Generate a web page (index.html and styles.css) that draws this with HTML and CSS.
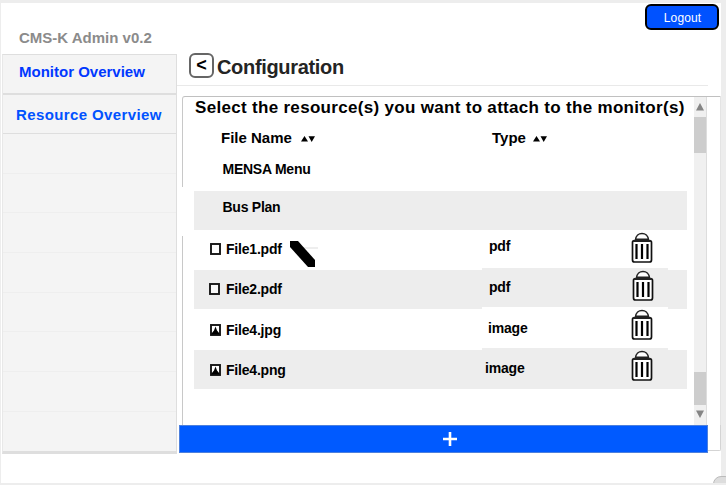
FILE: index.html
```html
<!DOCTYPE html>
<html lang="en">
<head>
<meta charset="utf-8">
<title>CMS-K Admin</title>
<link rel="stylesheet" href="styles.css">
</head>
<body>
<svg width="0" height="0" class="defs">
  <symbol id="trash" viewBox="0 0 22 32">
    <path d="M4.500 8C5-.8 17-.8 17.500 8" fill="#fff" stroke="#222" stroke-width="1.500"/>
    <rect x="1.500" y="8.500" width="19" height="21.500" rx="2" fill="#fff" stroke="#111" stroke-width="1.700"/>
    <path d="M2 9h18M4 7.500h14" stroke="#222" stroke-width="2"/>
    <path d="M5.500 12v15M11 12v15M16.500 12v15" stroke="#000" stroke-width="2.200"/>
  </symbol>
  <symbol id="box" viewBox="0 0 11 12">
    <rect x="1" y="1" width="9" height="10" fill="#fff" fill-opacity=".6" stroke="#151515" stroke-width="1.9"/>
  </symbol>
  <symbol id="image" viewBox="0 0 11 12">
    <rect x="1" y="1" width="9" height="10" fill="#fff" stroke="#151515" stroke-width="1.9"/>
    <path d="M1.500 10.500V9.500L4 6.500 5.500 2.500 7 6.500 9.500 9.500v1z" fill="#000"/>
  </symbol>
  <symbol id="sort" viewBox="0 0 14 6">
    <path d="M0 5.500 3.500 0 7 5.500zM7.500.3H14L10.700 6z" fill="#000"/>
  </symbol>
</svg>
<div class="app">
  <aside class="side">
    <div class="brand"><span>CMS-K Admin v0.2</span></div>
    <nav class="nav">
      <a class="item monitor"><span>Monitor Overview</span></a>
      <a class="item resource"><span>Resource Overview</span></a>
      <div class="blank"></div><div class="blank"></div><div class="blank"></div><div class="blank"></div>
      <div class="blank"></div><div class="blank"></div><div class="blank"></div><div class="blank"></div>
    </nav>
  </aside>
  <main class="main">
    <div class="top"><button class="logout">Logout</button></div>
    <header class="heading"><button class="back">&lt;</button><h1>Configuration</h1></header>
    <section class="panel">
      <div class="content">
        <h2><span>Select the resource(s) you want to attach to the monitor(s)</span></h2>
        <div class="columns">
          <div class="col"><span>File Name</span><svg class="sort"><use href="#sort"/></svg></div>
          <div class="col"><span>Type</span><svg class="sort"><use href="#sort"/></svg></div>
        </div>
        <div class="menu"><span>MENSA Menu</span></div>
        <div class="menu grey"><span>Bus Plan</span></div>
        <div class="row top-row">
          <div class="name first"><svg class="kind"><use href="#box"/></svg><span>File1.pdf</span><svg class="pencil" viewBox="0 0 26 27"><path d="M9 7h19" stroke="#ddd"/><path d="M0 0h8L25 19v7h-7L0 6z"/></svg></div>
          <div class="tools pdf"><span>pdf</span><svg class="trash"><use href="#trash"/></svg></div>
        </div>
        <div class="row grey">
          <div class="name second"><svg class="kind"><use href="#box"/></svg><span>File2.pdf</span></div>
          <div class="tools pdf shifted"><span>pdf</span><svg class="trash"><use href="#trash"/></svg></div>
        </div>
        <div class="row">
          <div class="name"><svg class="kind"><use href="#image"/></svg><span>File4.jpg</span></div>
          <div class="tools jpg"><span>image</span><svg class="trash"><use href="#trash"/></svg></div>
        </div>
        <div class="row grey">
          <div class="name"><svg class="kind"><use href="#image"/></svg><span>File4.png</span></div>
          <div class="tools png"><span>image</span><svg class="trash"><use href="#trash"/></svg></div>
        </div>
      </div>
      <div class="scroll">
        <svg class="arrow" viewBox="0 0 12 20"><path d="M2 13.500 6 6l4 7.500z"/></svg>
        <div class="thumb first-thumb"></div>
        <div class="thumb"></div>
        <svg class="arrow" viewBox="0 0 12 20"><path d="M2 5.500h8L6 13z"/></svg>
      </div>
    </section>
    <div class="footer"><button class="add"><svg width="16" height="16" viewBox="0 0 16 16"><path d="M8 1v14M1 8h14" stroke="#fff" stroke-width="2.600"/></svg></button><div class="edge"></div></div>
  </main>
  <div class="corner"></div>
</div>
</body>
</html>
```
FILE: styles.css
```css
* { box-sizing: border-box; }
body { margin: 0; background: #ededed; font-family: "Liberation Sans", Arial, sans-serif; font-weight: bold; color: #000; overflow: hidden; }
button { font: inherit; padding: 0; }
span { white-space: nowrap; }
.defs { position: absolute; }
.app { position: relative; display: flex; width: 720px; height: 480px; margin: 3px 0 0 1px; background: #fff; }
.side { width: 176px; padding-left: 1px; }
.brand { height: 51px; padding: 25px 0 0 17px; font-size: 15px; line-height: 20px; color: #8b8b8b; }
.nav { width: 175px; height: 400px; background: #f4f4f4; border: 1px solid #dedede; border-width: 1px 1px 3px; border-left-color: #e8e8e8; }
.item { display: block; height: 40px; border-bottom: 2px solid #dedede; color: #0038ff; font-size: 15px; line-height: 34px; padding-left: 16px; }
.resource { color: #0052ff; padding-left: 13px; line-height: 40px; height: 39px; border-bottom-width: 1px; letter-spacing: .38px; }
.blank { height: 39.700px; border-bottom: 1px solid #eee; }
.blank:last-child { border-bottom: 0; }
.main { width: 544px; }
.top { display: flex; justify-content: flex-end; height: 47px; padding: 1px 2px 0 0; }
.logout { width: 74px; height: 26px; border: 2px solid #000; border-radius: 6px; background: #0052ff; color: #fff; font-size: 12px; font-weight: normal; line-height: 24px; letter-spacing: .1px; padding-left: 1px; }
.heading { display: flex; width: 531px; height: 36px; padding: 3px 0 0 12px; border-bottom: 1px solid #e9e9e9; }
.back { width: 25px; height: 25px; border: 2px solid #666; border-radius: 6px; background: #fff; font-size: 18px; line-height: 19px; }
h1 { margin: 1px 0 0 3px; font-size: 20px; line-height: 26px; color: #242424; letter-spacing: -.33px; }
.panel { display: flex; height: 329px; margin: 10px 0 0 5px; border: 1px solid; border-color: #c0c0c0 #e4e4e4 transparent #c8c8c8; border-width: 1px 1px 0; border-top-left-radius: 3px; }
.content { width: 511px; padding-left: 11px; }
h2 { margin: 0; height: 27px; font-size: 17px; line-height: 21px; padding-left: 1px; letter-spacing: .31px; }
.columns { display: grid; grid-template-columns: 271px 1fr; height: 28px; padding-left: 27px; font-size: 15px; line-height: 28px; }
.sort { width: 14px; height: 6px; margin-left: 9px; vertical-align: 1px; }
.col:last-child .sort { margin-left: 7px; }
.menu { width: 493px; height: 39px; padding: 6px 0 0 28.500px; font-size: 14px; line-height: 22px; letter-spacing: -.25px; }
.menu.grey { position: relative; background: #ededed; padding-top: 5px; }
.menu.grey::before { content: ""; position: absolute; left: -13px; top: -4px; width: 3px; height: 49px; background: #fff; }
.row { display: grid; grid-template-columns: 288px 186px 19px; width: 493px; height: 41px; font-size: 14px; }
.row.top-row { height: 40px; }
.row.grey { height: 39px; background: #ededed; }
.name { display: flex; align-items: center; padding: 0 0 0 16px; }
.name span { letter-spacing: -.2px; }
.name.first { padding-bottom: 5px; }
.name.second { padding: 0 0 1px 15px; }
.second .kind { margin-right: 6px; }
.kind { width: 11px; height: 12px; margin-right: 5px; }
.pencil { width: 26px; height: 27px; margin: 11px 0 0 8px; overflow: visible; }
.tools { display: flex; height: 39px; margin-top: -2px; padding-left: 7px; align-items: center; background: #fff; }
.grey .tools { background: #ededed; }
.tools span { width: 142px; padding-bottom: 0; letter-spacing: -.2px; }
.trash { width: 22px; height: 32px; margin-bottom: 4px; }
.top-row .trash { margin: 0; }
.pdf:not(.shifted) span { padding-bottom: 4px; }
.shifted span { padding-bottom: 2px; }
.shifted .trash { margin-left: 1px; }
.jpg { padding-left: 6px; }
.jpg span { width: 143px; padding-top: 2px; }
.png { padding-left: 3px; }
.png span { width: 146px; }
.scroll { display: flex; flex-direction: column; width: 13px; height: 328px; background: #f0f0f0; border-right: 1px solid #ddd; }
.arrow { width: 12px; height: 20px; fill: #858585; }
.thumb { height: 33px; background: #cdcdcd; }
.first-thumb { height: 36px; margin-bottom: auto; }
.footer { display: flex; padding-left: 2px; }
.add { display: flex; align-items: center; justify-content: center; width: 529px; height: 28px; padding-left: 12px; background: #005aff; border: 1px solid #4d80dd; }
.edge { flex: 1; height: 26px; border: solid #d4d4d4; border-width: 0 1px 1px 0; border-bottom-right-radius: 2px; }
.corner { position: absolute; left: 712px; top: 473px; width: 20px; height: 20px; border: 1px solid #bbb; border-radius: 8px; background: #ddd; }
```
